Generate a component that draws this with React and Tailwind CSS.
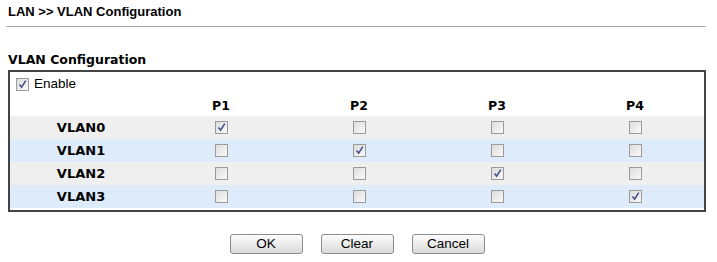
import { useState } from "react";

const ports = ["P1", "P2", "P3", "P4"];

function Box({ checked, onClick }) {
  return (
    <span
      onClick={onClick}
      className="inline-flex h-[13px] w-[13px] items-center justify-center border border-[#9a9a9a] bg-gradient-to-br from-[#dcdcdc] to-[#fafafa] cursor-default"
    >
      {checked && (
        <svg width="11" height="11" viewBox="0 0 11 11">
          <path d="M2.5 5.5 L4.6 8.2 L8.8 1.6" fill="none" stroke="#44508a" strokeWidth="1.6" />
        </svg>
      )}
    </span>
  );
}

function App() {
  const [enable, setEnable] = useState(true);
  const [map, setMap] = useState([
    [true, false, false, false],
    [false, true, false, false],
    [false, false, true, false],
    [false, false, false, true],
  ]);

  const toggle = (r, c) => {
    setMap(map.map((row, i) => (i === r ? row.map((v, j) => (j === c ? !v : v)) : row)));
  };

  return (
    <div className="w-[717px] h-[262px] bg-white text-black font-['DejaVu_Sans',sans-serif]">
      <div className="pl-[8px] pt-[4px] text-[13px] leading-[15px] font-bold font-['Liberation_Sans',sans-serif]">
        LAN &gt;&gt; VLAN Configuration
      </div>
      <div className="ml-[6px] mt-[7px] w-[700px] border-t border-[#a8a8a8]"></div>

      <div className="ml-[8px] mt-[25px] text-[12.5px] leading-[15px] font-bold">VLAN Configuration</div>

      <div className="ml-[8px] mt-[3px] w-[698px] h-[142px] border-2 border-[#444]">
        <div className="flex items-center h-[24px] pl-[6px] gap-[5px] text-[13.5px] font-['Liberation_Sans',sans-serif]">
          <Box checked={enable} onClick={() => setEnable(!enable)} />
          <span>Enable</span>
        </div>
        <div className="grid grid-cols-[142px_1fr_1fr_1fr_1fr] h-[20px] items-center text-[12.5px] font-bold">
          <div></div>
          {ports.map((p) => (
            <div key={p} className="text-center">{p}</div>
          ))}
        </div>
        {map.map((row, i) => (
          <div
            key={i}
            className={
              "grid grid-cols-[142px_1fr_1fr_1fr_1fr] h-[23px] items-center text-[13px] font-bold " +
              (i % 2 === 0 ? "bg-[#efefef]" : "bg-[#deebfa]")
            }
          >
            <div className="text-center">VLAN{i}</div>
            {row.map((v, j) => (
              <div key={j} className="flex justify-center">
                <Box checked={v} onClick={() => toggle(i, j)} />
              </div>
            ))}
          </div>
        ))}
      </div>

      <div className="ml-[8px] w-[698px] mt-[22px] flex justify-center gap-[18px] font-['Liberation_Sans',sans-serif]">
        {["OK", "Clear", "Cancel"].map((b) => (
          <button
            key={b}
            className="w-[73px] h-[20px] rounded-[3px] border border-[#8c8c8c] bg-gradient-to-b from-[#fdfdfd] to-[#dadada] text-[13.5px] leading-[18px] text-black"
          >
            {b}
          </button>
        ))}
      </div>
    </div>
  );
}

export default App;
